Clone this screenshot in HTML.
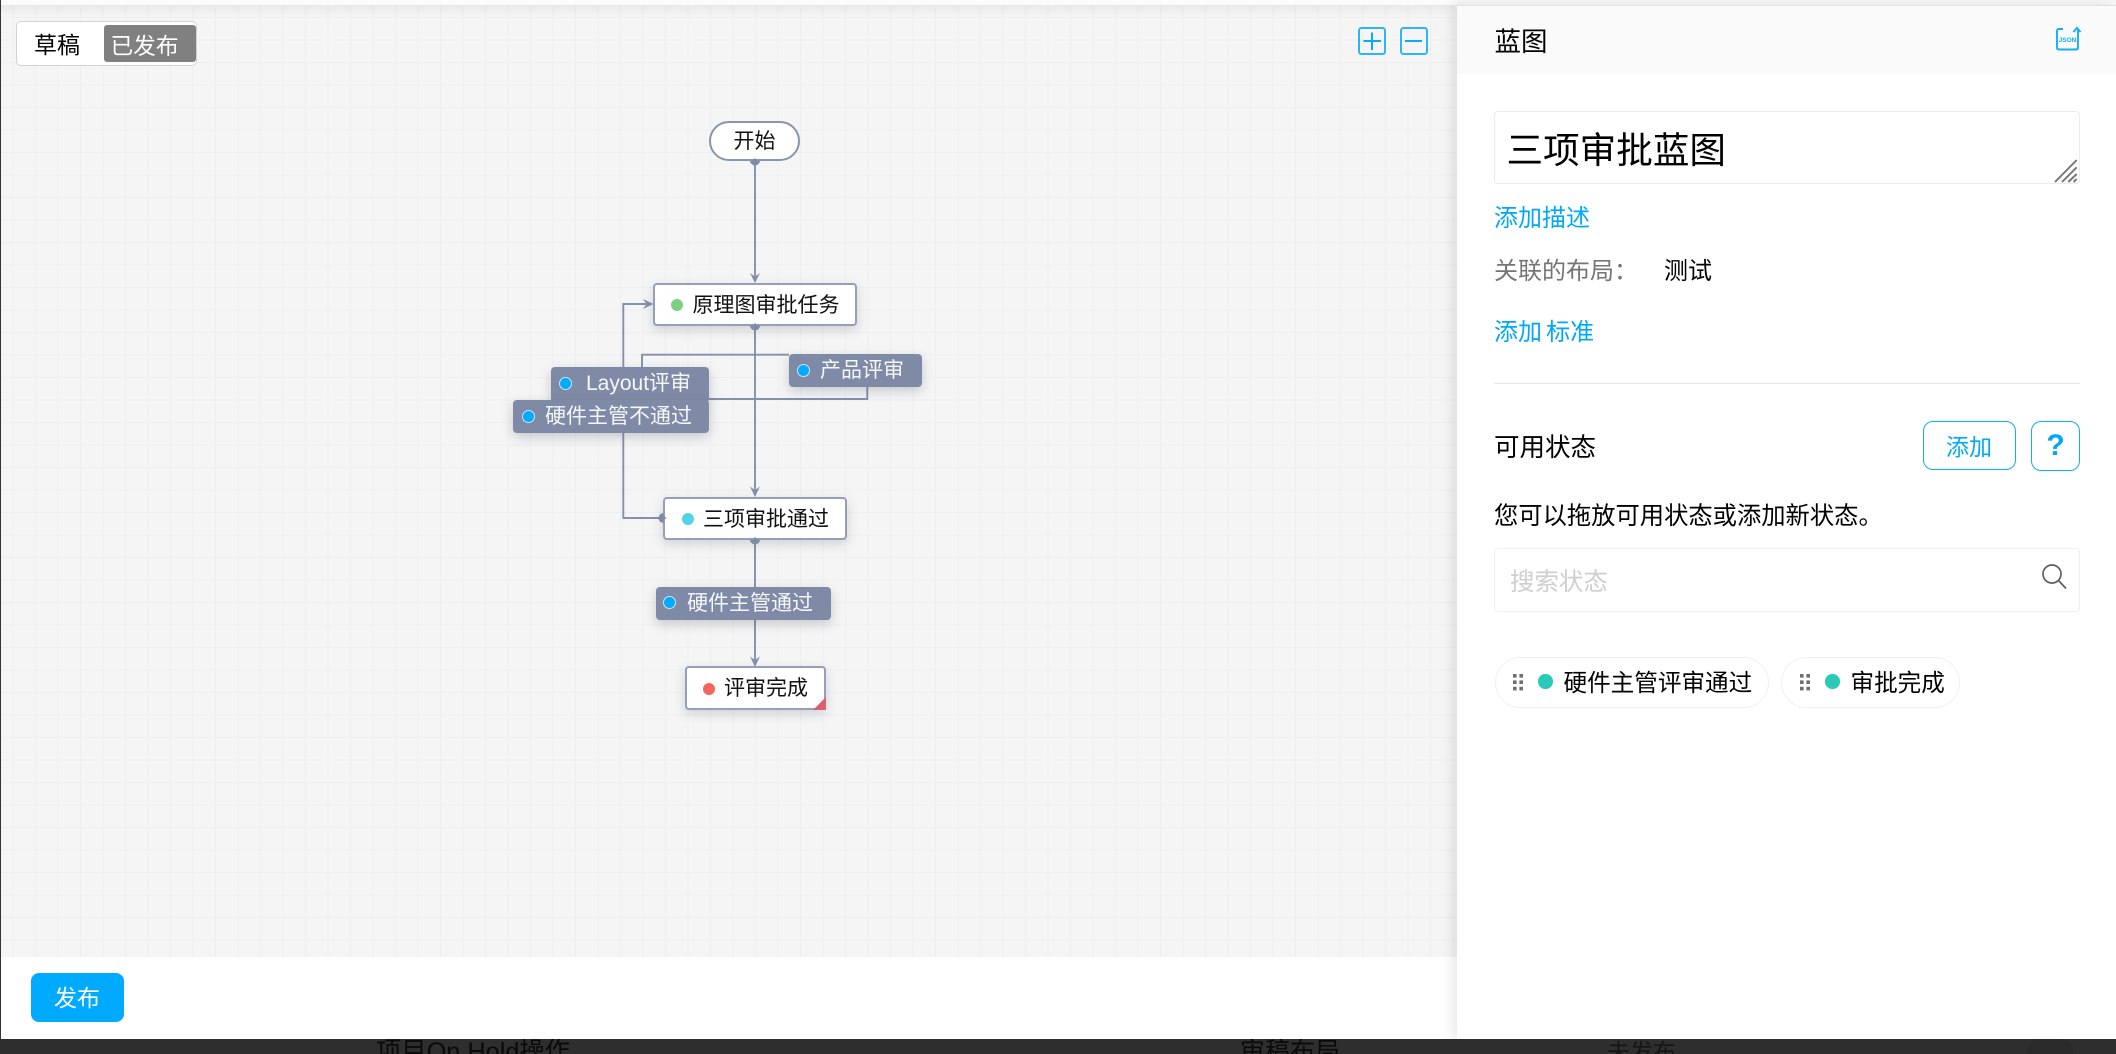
<!DOCTYPE html>
<html lang="zh-CN">
<head>
<meta charset="utf-8">
<title>蓝图</title>
<style>
html,body{margin:0;padding:0;width:2116px;height:1054px;overflow:hidden;background:#fff;}
body{position:relative;font-family:"Liberation Sans","Noto Sans CJK SC",sans-serif;color:#000;}
.a{position:absolute;box-sizing:border-box;}
.t{position:absolute;white-space:nowrap;}
#canvas{left:1px;top:5px;width:1456px;height:952px;background-color:#f5f5f5;
background-image:linear-gradient(to right,#eeeeee 1px,transparent 1px),linear-gradient(to bottom,#eeeeee 1px,transparent 1px);
background-size:22.5px 22.5px;background-position:11.5px 12px;}
.node{position:absolute;box-sizing:border-box;background:#fff;border:2px solid #959fb9;border-radius:4px;box-shadow:0 4px 11px rgba(60,70,90,.2);}
.lab{position:absolute;box-sizing:border-box;background:#7f8aa6;border-radius:4px;box-shadow:0 4px 11px rgba(60,70,90,.25);}
.dot{position:absolute;border-radius:50%;}
.bd{position:absolute;width:11px;height:11px;border-radius:50%;background:#00aaff;box-shadow:0 0 0 1px #cfe6f5;}
.nt{font-size:21px;line-height:30px;color:#111;}
.lt{font-size:21px;line-height:30px;color:#f6f7fa;}
.blue{color:#00a9f7;}
</style>
</head>
<body>
<div class="a" id="canvas"></div>
<div class="a" style="left:0;top:0;width:1457px;height:5px;background:#fbfbfb;"></div>
<div class="a" style="left:1px;top:5px;width:1456px;height:12px;background:linear-gradient(to bottom,rgba(0,0,0,.05),rgba(0,0,0,0));"></div>
<div class="a" style="left:1457px;top:0;width:659px;height:5px;background:#f8f8f8;"></div>

<!-- toggle -->
<div class="a" style="left:16px;top:21px;width:181px;height:45px;background:#fff;border:1.4px solid #d2d2d2;border-radius:5px;"></div>
<div class="a" style="left:104px;top:25px;width:92px;height:37px;background:#808080;border-radius:3px;"></div>
<div class="t" style="left:34px;top:28px;font-size:23px;line-height:34px;">草稿</div>
<div class="t" style="left:110.5px;top:28.5px;font-size:22.7px;line-height:34px;color:#fff;">已发布</div>

<!-- zoom buttons -->
<svg class="a" style="left:1350px;top:20px;" width="90" height="44" viewBox="0 0 90 44" fill="none" stroke="#2fb4fa">
<rect x="9" y="8" width="26" height="26" rx="2.5" stroke-width="2"/>
<path d="M13.5 21H31M22 12.5V30" stroke="#0aaafa" stroke-width="2"/>
<rect x="51" y="8" width="26" height="26" rx="2.5" stroke-width="2"/>
<path d="M55 21H72" stroke="#0aaafa" stroke-width="2"/>
</svg>

<!-- graph lines -->
<svg class="a" style="left:0;top:0;" width="1457" height="957" viewBox="0 0 1457 957" fill="none" stroke="#8590ab" stroke-width="1.9">
<path d="M755 160V280"/>
<path d="M755 326V398"/>
<path d="M642 367V354.7H789"/>
<path d="M867.3 386V399H709"/>
<path d="M755 399V494"/>
<path d="M662 518H623.3V304H650"/>
<path d="M755 540V587M755 619V664"/>
<g fill="#8590ab" stroke="none">
<path d="M750 273L755 276.5L760 273L755 283Z"/>
<path d="M750 486.5L755 490L760 486.5L755 497Z"/>
<path d="M750 656.5L755 660L760 656.5L755 667Z"/>
<path d="M643 299L646.5 304L643 309L653.5 304Z"/>
</g>
</svg>

<!-- nodes -->
<div class="a" style="left:709px;top:120.5px;width:91px;height:40px;background:#fff;border:2px solid #8a94ae;border-radius:20px;"></div>
<div class="t nt" style="left:733.5px;top:126.5px;">开始</div>

<div class="node" style="left:653px;top:282.5px;width:204px;height:43.5px;"></div>
<div class="dot" style="left:671px;top:299px;width:12px;height:12px;background:#7ccf80;"></div>
<div class="t nt" style="left:692.5px;top:290.5px;">原理图审批任务</div>

<div class="lab" style="left:789px;top:354px;width:133px;height:33px;"></div>
<div class="bd" style="left:798px;top:364.5px;"></div>
<div class="t lt" style="left:820px;top:356px;">产品评审</div>

<div class="lab" style="left:551px;top:367px;width:158px;height:36px;"></div>
<div class="bd" style="left:560px;top:378px;"></div>
<div class="t lt" style="left:586px;top:369px;">Layout评审</div>

<div class="lab" style="left:513px;top:400px;width:196px;height:33px;"></div>
<div class="bd" style="left:522.5px;top:410.5px;"></div>
<div class="t lt" style="left:545px;top:402px;">硬件主管不通过</div>

<div class="node" style="left:663px;top:496.5px;width:184px;height:43px;"></div>
<div class="dot" style="left:682px;top:513px;width:12px;height:12px;background:#50d4e8;"></div>
<div class="t nt" style="left:703px;top:505px;">三项审批通过</div>

<div class="lab" style="left:655.5px;top:586.5px;width:175px;height:33px;"></div>
<div class="bd" style="left:664px;top:597px;"></div>
<div class="t lt" style="left:687px;top:588.5px;">硬件主管通过</div>

<div class="node" style="left:684.5px;top:666px;width:141.5px;height:43.5px;overflow:hidden;"></div>
<div class="dot" style="left:703px;top:683px;width:12px;height:12px;background:#f5655d;"></div>
<div class="t nt" style="left:724px;top:674px;">评审完成</div>
<svg class="a" style="left:813px;top:697px;" width="13" height="13" viewBox="0 0 13 13"><path d="M13 0V13H0Z" fill="#d9606d"/></svg>

<!-- connector dots -->
<svg class="a" style="left:0;top:0;" width="1457" height="957" viewBox="0 0 1457 957" fill="#7f8aa6">
<path d="M750 160.5H753.5L755 157.5L756.5 160.5H760A5 5 0 0 1 750 160.5Z"/>
<path d="M750 325.5H753.5L755 322.5L756.5 325.5H760A5 5 0 0 1 750 325.5Z"/>
<path d="M750 539.5H753.5L755 536.5L756.5 539.5H760A5 5 0 0 1 750 539.5Z"/>
<path d="M663.5 513V516.5L667 518L663.5 519.5V523A5 5 0 0 1 663.5 513Z"/>
</svg>

<!-- bottom bar -->
<div class="a" style="left:1px;top:957px;width:1456px;height:82px;background:#fff;"></div>
<div class="a" style="left:31px;top:973px;width:93px;height:49px;background:#00aaff;border-radius:8px;"></div>
<div class="t" style="left:54px;top:981px;font-size:23px;line-height:34px;color:#fff;">发布</div>

<!-- panel -->
<div class="a" style="left:1457px;top:5px;width:659px;height:1034px;background:#fff;box-shadow:-4px 0 14px rgba(0,0,0,.1);"></div>
<div class="a" style="left:1457px;top:5px;width:659px;height:69px;background:#fafafa;border-top:1px solid #e2e2e2;"></div>
<div class="t" style="left:1494.5px;top:23px;font-size:26.5px;line-height:38px;">蓝图</div>
<svg class="a" style="left:2050px;top:22px;" width="34" height="34" viewBox="0 0 34 34" fill="none" stroke="#12aefb" stroke-width="1.9">
<path d="M13 7H9Q7 7 7 9V25.5Q7 27.5 9 27.5H26Q28 27.5 28 25.5V7"/>
<path d="M23.5 10L27 6L30.5 10"/>
<text x="17.5" y="20" font-size="6.5" font-weight="700" fill="#12aefb" stroke="none" text-anchor="middle" font-family="Liberation Sans,sans-serif">JSON</text>
</svg>

<div class="a" style="left:1494px;top:111px;width:586px;height:73px;border:1.4px solid #ececec;border-radius:4px;background:#fff;"></div>
<div class="t" style="left:1506.5px;top:124.5px;font-size:36.6px;line-height:52px;">三项审批蓝图</div>
<svg class="a" style="left:2054px;top:158px;" width="26" height="26" viewBox="0 0 26 26" stroke="#747474" stroke-width="1.9" fill="none">
<path d="M1 24L22.7 2M8 24L22.7 9.3M14.3 24L22.7 16M19.5 24L22.7 21"/>
</svg>

<div class="t blue" style="left:1494px;top:201.5px;font-size:24px;line-height:34px;">添加描述</div>
<div class="t" style="left:1494px;top:254.5px;font-size:24px;line-height:34px;color:#757575;">关联的布局：</div>
<div class="t" style="left:1664px;top:254.5px;font-size:24px;line-height:34px;">测试</div>
<div class="t blue" style="left:1494px;top:315.5px;font-size:24px;line-height:34px;word-spacing:-2.5px;">添加 标准</div>

<div class="a" style="left:1494px;top:382.5px;width:586px;height:1.4px;background:#e6e6e6;"></div>

<div class="t" style="left:1494px;top:431px;font-size:25.5px;line-height:34px;">可用状态</div>
<div class="a" style="left:1923px;top:421px;width:93px;height:49px;border:1.4px solid #12aefb;border-radius:10px;"></div>
<div class="t blue" style="left:1946px;top:430px;font-size:23px;line-height:34px;">添加</div>
<div class="a" style="left:2031px;top:421px;width:49px;height:50px;border:1.4px solid #12aefb;border-radius:10px;"></div>
<div class="t blue" style="left:2031px;top:429px;width:49px;text-align:center;font-size:30px;line-height:34px;font-weight:700;">?</div>

<div class="t" style="left:1494px;top:499.5px;font-size:24.3px;line-height:34px;">您可以拖放可用状态或添加新状态。</div>

<div class="a" style="left:1494px;top:548px;width:586px;height:64px;border:1.4px solid #efefef;border-radius:4px;background:#fff;"></div>
<div class="t" style="left:1510px;top:565.5px;font-size:24.5px;line-height:34px;color:#cfcfcf;">搜索状态</div>
<svg class="a" style="left:2040px;top:562px;" width="30" height="30" viewBox="0 0 30 30" fill="none" stroke="#5f5f5f" stroke-width="1.7">
<circle cx="12" cy="12" r="9"/>
<path d="M18.5 18.5L26 26.5"/>
</svg>

<div class="a" style="left:1494.5px;top:657px;width:274px;height:51px;border:1.4px solid #efefef;border-radius:26px;background:#fff;"></div>
<svg class="a" style="left:1513px;top:674px;" width="11" height="17" viewBox="0 0 11 17" fill="#6f6f6f">
<rect x="0" y="0" width="3.6" height="3.6"/><rect x="6.4" y="0" width="3.6" height="3.6"/>
<rect x="0" y="6.4" width="3.6" height="3.6"/><rect x="6.4" y="6.4" width="3.6" height="3.6"/>
<rect x="0" y="12.8" width="3.6" height="3.6"/><rect x="6.4" y="12.8" width="3.6" height="3.6"/>
</svg>
<div class="dot" style="left:1538px;top:674px;width:14.5px;height:14.5px;background:#2cc8b8;"></div>
<div class="t" style="left:1563.5px;top:666.5px;font-size:23.6px;line-height:34px;">硬件主管评审通过</div>

<div class="a" style="left:1781px;top:657px;width:179px;height:51px;border:1.4px solid #efefef;border-radius:26px;background:#fff;"></div>
<svg class="a" style="left:1800px;top:674px;" width="11" height="17" viewBox="0 0 11 17" fill="#6f6f6f">
<rect x="0" y="0" width="3.6" height="3.6"/><rect x="6.4" y="0" width="3.6" height="3.6"/>
<rect x="0" y="6.4" width="3.6" height="3.6"/><rect x="6.4" y="6.4" width="3.6" height="3.6"/>
<rect x="0" y="12.8" width="3.6" height="3.6"/><rect x="6.4" y="12.8" width="3.6" height="3.6"/>
</svg>
<div class="dot" style="left:1825px;top:674px;width:14.5px;height:14.5px;background:#2cc8b8;"></div>
<div class="t" style="left:1850.5px;top:666.5px;font-size:23.6px;line-height:34px;">审批完成</div>

<!-- left edge + dark strip -->
<div class="a" style="left:0;top:0;width:1px;height:1054px;background:#333;"></div>
<div class="a" style="left:0;top:1039px;width:2116px;height:15px;background:#2e2e2e;overflow:hidden;">
  <div class="t" style="left:376px;top:-4px;font-size:25.3px;line-height:34px;color:#0a0a0a;">项目On Hold操作</div>
  <div class="t" style="left:1240px;top:-4px;font-size:25px;line-height:34px;color:#0a0a0a;">审稿布局</div>
  <div class="t" style="left:1607px;top:-4px;font-size:23px;line-height:34px;color:#151515;">未发布</div>
  <div class="a" style="left:2027px;top:0;width:46px;height:24px;border-radius:12px;background:#2a2a2a;"></div>
</div>
</body>
</html>
